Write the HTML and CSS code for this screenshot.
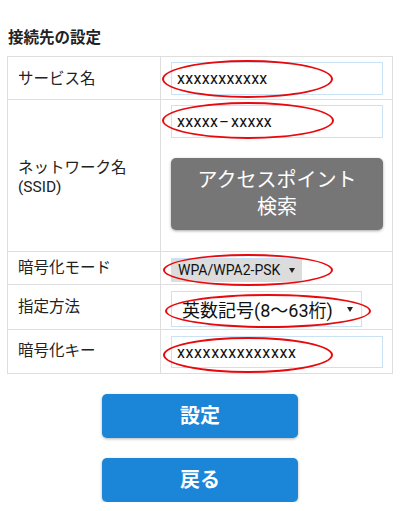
FILE: index.html
```html
<!DOCTYPE html>
<html lang="ja">
<head>
<meta charset="utf-8">
<title>接続先の設定</title>
<link rel="stylesheet" href="styles.css">
</head>
<body>
<div class="page">
  <h2 class="title">接続先の設定</h2>
  <div class="form">
    <div class="label r1">サービス名</div>
    <div class="field r1">
      <div class="input">xxxxxxxxxxx</div>
      <div class="mark m1"></div>
    </div>

    <div class="label r2">ネットワーク名<br>(SSID)</div>
    <div class="field r2">
      <div class="input">xxxxx<span class="dash">-</span>xxxxx</div>
      <div class="search">アクセスポイント<br>検索</div>
      <div class="mark m2"></div>
    </div>

    <div class="label r3">暗号化モード</div>
    <div class="field r3">
      <div class="select sel-mode">WPA/WPA2-PSK<span class="arrow"></span></div>
      <div class="mark m3"></div>
    </div>

    <div class="label r4">指定方法</div>
    <div class="field r4">
      <div class="select sel-kind">英数記号(8〜63桁)<span class="arrow"></span></div>
      <div class="mark m4"></div>
    </div>

    <div class="label r5">暗号化キー</div>
    <div class="field r5">
      <div class="input key">xxxxxxxxxxxxxx</div>
      <div class="mark m5"></div>
    </div>
  </div>

  <div class="actions">
    <div class="btn">設定</div>
    <div class="btn">戻る</div>
  </div>
</div>
</body>
</html>
```

FILE: styles.css
```css
html, body {
  margin: 0;
  padding: 0;
  background: #fff;
}

body {
  font-family: "Roboto", "Noto Sans CJK JP", sans-serif;
  color: #222;
}

.page {
  padding: 28px 8px 0 7px;
}

.title {
  margin: 0 0 8px 1px;
  font-size: 15.5px;
  line-height: 20px;
  font-weight: bold;
  color: #222;
}

.form {
  display: grid;
  grid-template-columns: 153px 232px;
  width: 386px;
  box-sizing: border-box;
  border-top: 1px solid #dedede;
  border-left: 1px solid #dedede;
}

.label,
.field {
  box-sizing: border-box;
  border-right: 1px solid #dedede;
  border-bottom: 1px solid #dedede;
}

.label {
  display: flex;
  align-items: center;
  padding: 0 8px 0 10px;
  font-size: 15.5px;
  line-height: 19px;
  color: #222;
}

.label.r1 { padding-top: 2px; }
.label.r2 { padding-top: 4px; }

.field {
  position: relative;
  padding: 5px 9px 4px 10px;
}

.field.r2 { padding-bottom: 21px; }
.field.r3 { padding: 6px 9px 2px 10px; }
.field.r4 { padding: 6px 9px 2px 10px; }
.field.r5 { padding: 6px 9px 5px 10px; }

.input {
  box-sizing: border-box;
  height: 33px;
  border: 1px solid #c9e2f6;
  background: #fff;
  padding-left: 5px;
  font-size: 16px;
  line-height: 32px;
  color: #111;
  letter-spacing: 0.3px;
}

.input .dash {
  display: inline-block;
  transform: scaleX(1.9);
  margin: 0 4px 0 4px;
}

.input.key {
  height: 32px;
  line-height: 31px;
  letter-spacing: 0.6px;
}

.search {
  margin-top: 20px;
  height: 72px;
  box-sizing: border-box;
  border-radius: 5px;
  background: #767676;
  box-shadow: 0 1px 3px rgba(0, 0, 0, 0.35);
  color: #fff;
  font-size: 20px;
  line-height: 27px;
  text-align: center;
  padding-top: 9px;
}

.select {
  box-sizing: border-box;
  display: flex;
  align-items: center;
  border: 1px solid #c9e2f6;
  color: #111;
}

.sel-mode {
  width: 131px;
  height: 24px;
  background: #dcdcdc;
  padding-left: 6px;
  font-size: 14px;
}

.sel-mode .arrow {
  margin-left: 9px;
}

.sel-kind {
  width: 191px;
  height: 36px;
  background: #fff;
  padding-left: 10px;
  font-size: 18px;
}

.sel-kind .arrow {
  margin-left: 14px;
}

.arrow {
  display: inline-block;
  width: 0;
  height: 0;
  border-left: 3px solid transparent;
  border-right: 3px solid transparent;
  border-top: 5px solid #222;
}

.mark {
  position: absolute;
  box-sizing: border-box;
  border: 2.5px solid #e8090d;
  border-radius: 50%;
  pointer-events: none;
}

.m1 { left: 1px; top: 3px; width: 171px; height: 38px; }
.m2 { left: 1px; top: 2px; width: 172px; height: 37px; }
.m3 { left: 2px; top: 2px; width: 170px; height: 32px; }
.m4 { left: 4px; top: 9px; width: 206px; height: 34px; }
.m5 { left: 2px; top: 7px; width: 170px; height: 36px; }

.actions {
  display: flex;
  flex-direction: column;
  align-items: center;
  gap: 20px;
  padding: 20px 0 0;
  margin-left: -7px;
  margin-right: -8px;
}

.btn {
  width: 196px;
  height: 44px;
  border-radius: 5px;
  background: #1b86d8;
  box-shadow: 0 1px 3px rgba(0, 0, 0, 0.3);
  color: #fff;
  font-size: 20px;
  font-weight: bold;
  line-height: 44px;
  text-align: center;
}
```
